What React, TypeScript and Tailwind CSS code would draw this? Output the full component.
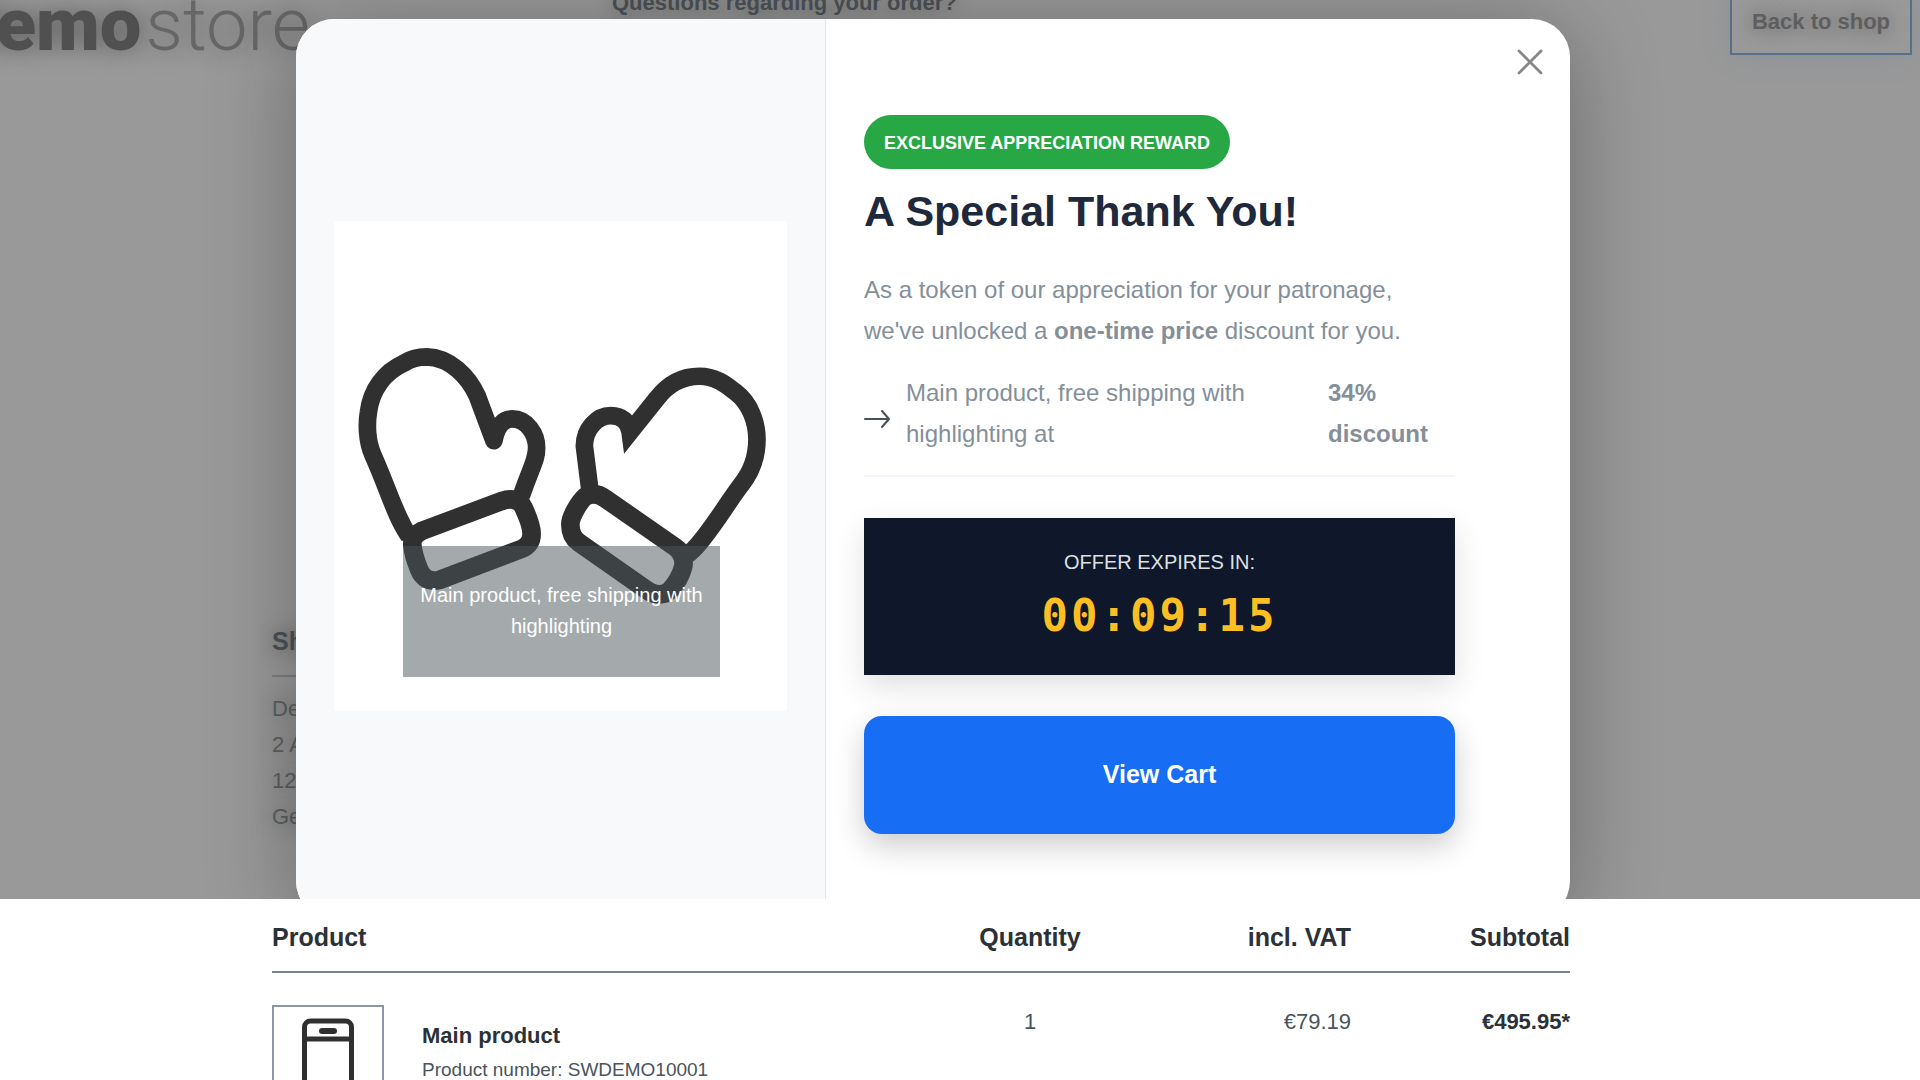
import { X } from "lucide-react";

const addressLines = ["Demo Customer", "2 Avenue", "12345 City", "Germany"];

const items = [
  {
    name: "Main product",
    number: "SWDEMO10001",
    quantity: 1,
    vat: "€79.19",
    subtotal: "€495.95*",
  },
];

const Gloves = () => (
  <svg
    viewBox="43 -294 1357 1467"
    className="block w-full bg-white"
    fill="none"
    stroke="#303030"
    strokeWidth="53"
    role="img"
    aria-label="Pair of mittens"
  >
    {/* left mitten */}
    <path
      strokeLinejoin="round"
      d="M268 650C226 590 204 505 160 408C140 364 141 310 146 280C154 210 195 158 252 132C272 119 296 113 320 113C392 115 446 172 472 230L522 364C530 322 548 299 576 299C622 299 650 345 650 385C650 425 634 440 604 530"
    />
    <path
      strokeWidth="56"
      d="M278 680C275 658 285 645 305 635L545 545C575 535 600 540 611 565C625 595 635 620 635 643C635 665 625 680 605 688L360 781C330 790 308 775 298 750C286 720 280 700 278 680Z"
    />
    {/* right mitten */}
    <path
      strokeMiterlimit="10"
      d="M810 515L793 380C793 330 830 289 872 289C906 289 926 308 930 338L1010 238C1045 192 1090 171 1138 171C1190 171 1225 203 1245 218C1290 252 1310 310 1310 360C1310 425 1288 465 1262 497C1215 560 1165 645 1120 690C1112 699 1104 705 1092 712"
    />
    <path
      strokeWidth="56"
      d="M751 615C751 590 780 545 795 532C815 520 835 522 855 537L1065 683C1090 700 1093 730 1088 745C1080 775 1065 795 1050 812C1035 828 1005 828 985 815L775 668C755 653 751 635 751 615Z"
    />
  </svg>
);

const Phone = () => (
  <svg viewBox="0 0 52 108" className="w-[52px]" fill="none" stroke="#303030" strokeWidth="5">
    <rect x="2.5" y="3" width="47" height="102" rx="6" />
    <path d="M3 21h46M3 88h46" />
    <path d="M20 13h12" strokeWidth="6" strokeLinecap="round" />
  </svg>
);

const Arrow = () => (
  <svg
    viewBox="0 0 26 20"
    className="mt-3 w-[26px] shrink-0"
    fill="none"
    stroke="#495057"
    strokeWidth="2"
    strokeLinecap="round"
    strokeLinejoin="round"
  >
    <path d="M1 10h23M18 2l7 8l-7 8" />
  </svg>
);

const ShopPage = () => (
  <div className="col-start-1 row-start-1 flex min-w-0 flex-col overflow-hidden">
    <header className="grid h-[55px] grid-cols-[310px_1fr_auto] grid-rows-[55px] items-end pr-2">
      <div className="flex h-[72px] items-end justify-end gap-1 font-[Roboto,sans-serif] text-[74px] leading-[60px] text-[#666] [text-shadow:0_0_24px_rgba(0,0,0,0.4)]">
        <span className="font-black text-[#505050]">demo</span>
        <span className="font-light">store</span>
      </div>
      <p className="mb-[38px] pl-[302px] text-[22px] leading-7 font-bold text-[#4c5257] [text-shadow:0_0_20px_rgba(0,0,0,0.4)]">
        Questions regarding your order?
      </p>
      <a
        href="#shop"
        className="flex h-[68px] w-[182px] items-center justify-center border-2 border-[#56708c] text-[22px] font-bold text-[#5e5e5e] shadow-[0_0_30px_rgba(86,112,140,0.2)] [text-shadow:0_0_20px_rgba(0,0,0,0.4)]"
      >
        Back to shop
      </a>
    </header>
    <section className="mt-[568px] ml-[272px] w-[400px] text-[#5b6064] [text-shadow:0_0_20px_rgba(0,0,0,0.4)]">
      <h2 className="border-b-2 border-[#7b7f82] pb-4 text-[25px] leading-9 font-bold text-[#4c5257]">
        Shipping address
      </h2>
      <address className="mt-[14px] text-[22px] leading-9 not-italic">
        {addressLines.map((line) => (
          <div key={line}>{line}</div>
        ))}
      </address>
    </section>
  </div>
);

const RewardModal = () => (
  <div
    role="dialog"
    aria-label="A Special Thank You!"
    className="relative col-start-1 row-start-1 mt-[19px] mr-[350px] -mb-5 ml-[296px] flex rounded-[38px] bg-white shadow-[0_10px_90px_rgba(0,0,0,0.3)]"
  >
    <div className="flex w-[530px] shrink-0 items-center rounded-l-[38px] border-r border-[#e2e8ec] bg-[#f8f9fb] px-[38px] pb-[6px]">
      <div className="relative w-full">
        <Gloves />
        <p className="absolute bottom-[34px] left-[69px] h-[131px] w-[317px] bg-[#495357]/50 px-4 pt-[34px] text-center text-[20px] leading-[31px] text-white">
          Main product, free shipping with highlighting
        </p>
      </div>
    </div>

    <div className="flex-1 pt-24 pr-[115px] pb-[85px] pl-[38px]">
      <span className="inline-flex h-[54px] items-center rounded-full bg-[#28a745] px-5 pt-[2px] text-[18px] font-bold text-white">
        EXCLUSIVE APPRECIATION REWARD
      </span>
      <h1 className="mt-3 text-[43px] leading-[60px] font-bold text-[#1e293b]">
        A Special Thank You!
      </h1>
      <p className="mt-7 text-[24px] leading-[41px] text-[#848f9a]">
        As a token of our appreciation for your patronage,
        <br />
        we've unlocked a <strong>one-time price</strong> discount for you.
      </p>
      <div className="mt-[21px] flex items-center gap-4 border-b-2 border-[#f1f5f9] pb-[21px] text-[24px] leading-[41px] text-[#848f9a]">
        <Arrow />
        <span className="flex-1">Main product, free shipping with highlighting at</span>
        <strong className="w-[127px]">34% discount</strong>
      </div>
      <div className="mt-[41px] flex flex-col items-center bg-[#0f172a] pt-7 pb-[25px] shadow-[0_12px_30px_rgba(0,0,0,0.12)]">
        <span className="text-[20px] leading-8 text-[#dee0e3]">OFFER EXPIRES IN:</span>
        <time className="mt-1 font-['DejaVu_Sans_Mono',monospace] text-[44px] leading-[68px] font-bold tracking-[3px] text-[#fbbf24]">
          00:09:15
        </time>
      </div>
      <button
        type="button"
        className="mt-[41px] h-[118px] w-full rounded-[18px] bg-[#176df3] text-[25px] font-bold text-white shadow-[0_12px_30px_rgba(0,0,0,0.2)]"
      >
        View Cart
      </button>
    </div>

    <button type="button" aria-label="Close" className="absolute top-[21px] right-[18px] text-[#868686]">
      <X size={44} strokeWidth={1.5} />
    </button>
  </div>
);

const OrderTable = () => (
  <div className="bg-white pr-[350px] pl-[272px] text-[22px] text-[#2b3136]">
    <table className="w-full border-collapse">
      <thead>
        <tr className="border-b-2 border-[#798490] text-[25px] leading-[36px]">
          <th className="pt-5 pb-4 text-left">Product</th>
          <th className="w-[220px] pt-5 pb-4 text-center">Quantity</th>
          <th className="w-[211px] pt-5 pb-4 text-right">incl. VAT</th>
          <th className="w-[219px] pt-5 pb-4 text-right">Subtotal</th>
        </tr>
      </thead>
      <tbody>
        {items.map((item) => (
          <tr key={item.number} className="align-top">
            <td className="pt-8">
              <div className="flex gap-[38px]">
                <div className="flex h-[134px] w-[112px] items-center justify-center border-2 border-[#8d97a3]">
                  <Phone />
                </div>
                <div className="pt-[14px]">
                  <p className="leading-[34px] font-bold">{item.name}</p>
                  <p className="text-[19px] leading-[34px] text-[#4a545b]">
                    Product number: {item.number}
                  </p>
                </div>
              </div>
            </td>
            <td className="pt-8 text-center leading-[34px] text-[#4a545b]">{item.quantity}</td>
            <td className="pt-8 text-right leading-[34px] text-[#4a545b]">{item.vat}</td>
            <td className="pt-8 text-right leading-[34px] font-bold">{item.subtotal}</td>
          </tr>
        ))}
      </tbody>
    </table>
  </div>
);

const App = () => (
  <main className="h-screen overflow-hidden bg-white font-['Liberation_Sans',Arial,sans-serif]">
    <div className="grid overflow-hidden bg-[#999]">
      <ShopPage />
      <RewardModal />
    </div>
    <OrderTable />
  </main>
);

export default App;
